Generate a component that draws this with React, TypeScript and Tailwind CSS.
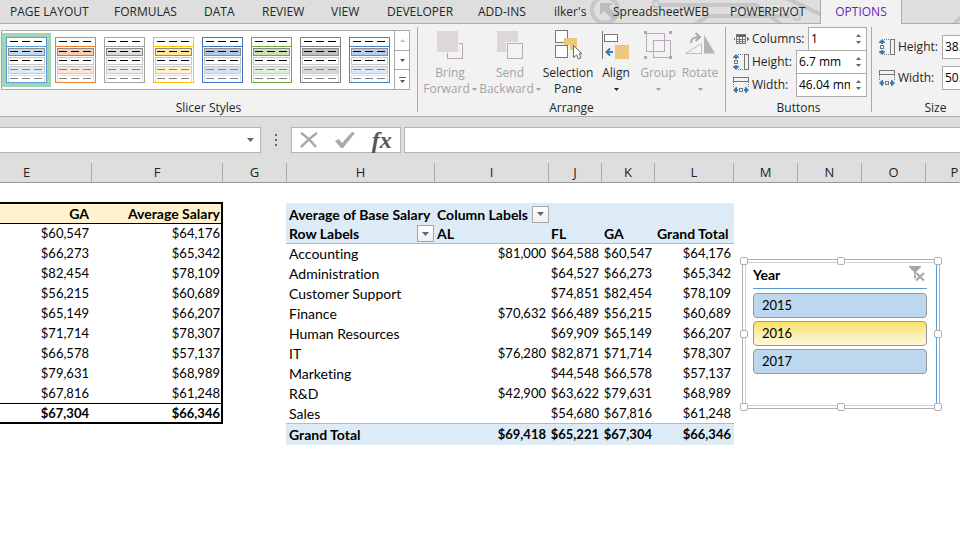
import type { ReactNode } from "react";

const TABS = [
  { name: "PAGE LAYOUT", width: "w-[104px]" },
  { name: "FORMULAS", width: "w-[90px]" },
  { name: "DATA", width: "w-[58px]" },
  { name: "REVIEW", width: "w-[69px]" },
  { name: "VIEW", width: "w-[56px]" },
  { name: "DEVELOPER", width: "w-[91px]" },
  { name: "ADD-INS", width: "w-[76px]" },
  { name: "ilker's", width: "w-[59px]" },
  { name: "SpreadsheetWEB", width: "w-[117px]" },
  { name: "POWERPIVOT", width: "w-[90px]" },
];

const SLICER_STYLES = [
  { name: "Light 1", edge: "#5b9bd5", on: "#bdd7ee", off: "#ddebf7" },
  { name: "Light 2", edge: "#ed7d31", on: "#f8cbad", off: "#fce4d6" },
  { name: "Light 3", edge: "#a5a5a5", on: "#dbdbdb", off: "#ededed" },
  { name: "Light 4", edge: "#ffc000", on: "#ffe699", off: "#fff2cc" },
  { name: "Light 5", edge: "#4472c4", on: "#b4c6e7", off: "#d9e1f2" },
  { name: "Light 6", edge: "#70ad47", on: "#c6e0b4", off: "#e2efda" },
  { name: "Other 1", edge: "#7f7f7f", on: "#bfbfbf", off: "#d9d9d9" },
  { name: "Other 2", edge: "#4f81bd", on: "#b4cbee", off: "#dce8f8" },
];

const COLUMNS = [
  { name: "E", width: "w-[92px] pr-[38px]" },
  { name: "F", width: "w-[131px]" },
  { name: "G", width: "w-16" },
  { name: "H", width: "w-[148px]" },
  { name: "I", width: "w-[114px]" },
  { name: "J", width: "w-[53px]" },
  { name: "K", width: "w-[53px]" },
  { name: "L", width: "w-[79px]" },
  { name: "M", width: "w-16" },
  { name: "N", width: "w-16" },
  { name: "O", width: "w-16" },
  { name: "P", width: "w-16 pr-1.5" },
];

const ROWS = [
  { label: "Accounting", al: "$81,000", fl: "$64,588", ga: "$60,547", total: "$64,176" },
  { label: "Administration", al: "", fl: "$64,527", ga: "$66,273", total: "$65,342" },
  { label: "Customer Support", al: "", fl: "$74,851", ga: "$82,454", total: "$78,109" },
  { label: "Finance", al: "$70,632", fl: "$66,489", ga: "$56,215", total: "$60,689" },
  { label: "Human Resources", al: "", fl: "$69,909", ga: "$65,149", total: "$66,207" },
  { label: "IT", al: "$76,280", fl: "$82,871", ga: "$71,714", total: "$78,307" },
  { label: "Marketing", al: "", fl: "$44,548", ga: "$66,578", total: "$57,137" },
  { label: "R&D", al: "$42,900", fl: "$63,622", ga: "$79,631", total: "$68,989" },
  { label: "Sales", al: "", fl: "$54,680", ga: "$67,816", total: "$61,248" },
];

const YEARS = [
  { year: "2015", selected: false },
  { year: "2016", selected: true },
  { year: "2017", selected: false },
];

const HANDLES = [
  "left-0 top-0",
  "left-1/2 top-0 -translate-x-1/2",
  "right-0 top-0",
  "left-0 top-1/2 -translate-y-1/2",
  "right-0 top-1/2 -translate-y-1/2",
  "bottom-0 left-0",
  "bottom-0 left-1/2 -translate-x-1/2",
  "bottom-0 right-0",
];

function Caret({ className = "text-[#666]" }: { className?: string }) {
  return (
    <svg viewBox="0 0 7 4" className={`h-1 w-[7px] ${className}`} aria-hidden="true">
      <path d="M0 0h7L3.5 4z" fill="currentColor" />
    </svg>
  );
}

function SmallCaret({ className = "" }: { className?: string }) {
  return (
    <svg viewBox="0 0 5 3" className={`h-[3px] w-[5px] ${className}`} aria-hidden="true">
      <path d="M0 0h5L2.5 3z" fill="currentColor" />
    </svg>
  );
}

function CircuitPattern() {
  return (
    <svg viewBox="0 0 380 23" className="absolute left-[580px] top-0 h-[23px] w-[380px]" aria-hidden="true">
      <g fill="none" stroke="#c6c6c6" strokeWidth="4">
        <circle cx="25" cy="10" r="13" />
        <path d="M80 5h96l26 20M114 25l14-9h82M206-2l36 17M372 26l14-14" />
        <circle cx="76" cy="4" r="3" strokeWidth="2" />
        <circle cx="217" cy="17" r="3" strokeWidth="2" />
      </g>
      <path d="M20 3h13l-4 4 8 9-4 4-9-9-4 4z" fill="#bcbcbc" />
    </svg>
  );
}

function StyleThumb({ edge, on, off }: { edge: string; on: string; off: string }) {
  const rows = [
    { y: 11, fill: on, line: "#8c8c8c", dash: "#000" },
    { y: 20, fill: "#fff", line: "#c8c8c8", dash: "#000" },
    { y: 29, fill: off, line: "#c8c8c8", dash: "#808080" },
    { y: 38, fill: "#fff", line: "#dcdcdc", dash: "#808080" },
  ];
  return (
    <svg viewBox="0 0 41 46" className="h-[46px] w-[41px]" shapeRendering="crispEdges" aria-hidden="true">
      <rect width="41" height="46" fill="#fff" />
      <path d="M4 4.5h8m4 0h8m4 0h8" stroke="#000" />
      {rows.map((r) => (
        <g key={r.y}>
          <rect x="2.5" y={r.y + 0.5} width="36" height="7" fill={r.fill} stroke={r.line} />
          <path d={`M4 ${r.y + 3.5}h8m4 0h8m4 0h8`} stroke={r.dash} />
        </g>
      ))}
      <path d="M.5.5h40v45H.5zM0 9.5h41" fill="none" stroke={edge} />
    </svg>
  );
}

function BringForwardIcon() {
  return (
    <svg viewBox="0 0 32 32" className="size-8" shapeRendering="crispEdges" aria-hidden="true">
      <rect x="13.5" y="14.5" width="15" height="15" fill="#f5f1f7" stroke="#b1adb3" />
      <rect x="2" y="1" width="23" height="23" fill="#f2f2f2" />
      <rect x="3" y="2" width="21" height="21" fill="#dcd7db" />
    </svg>
  );
}

function SendBackwardIcon() {
  return (
    <svg viewBox="0 0 32 32" className="size-8" shapeRendering="crispEdges" aria-hidden="true">
      <rect x="3" y="2" width="21" height="21" fill="#dcd7db" />
      <rect x="12" y="13" width="18" height="18" fill="#f2f2f2" />
      <rect x="13.5" y="14.5" width="15" height="15" fill="#f5f1f7" stroke="#b1adb3" />
    </svg>
  );
}

function SelectionPaneIcon() {
  return (
    <svg viewBox="0 0 32 32" className="size-8" aria-hidden="true">
      <g shapeRendering="crispEdges">
        <path d="M12 9h13v12h-7v-5h-6z" fill="#edc77d" />
        <rect x="3.5" y="1.5" width="12" height="12" fill="#fff" stroke="#777" />
        <path d="M12 9h4v5h-4z" fill="#edc77d" />
        <rect x="3.5" y="16.5" width="12" height="12" fill="#fff" stroke="#777" />
      </g>
      <path d="M21.5 16.5v12l3-2.5 2 4 2.5-1.2-2-4h3z" fill="#fff" stroke="#666" />
    </svg>
  );
}

function AlignIcon() {
  return (
    <svg viewBox="0 0 32 32" className="size-8" aria-hidden="true">
      <g shapeRendering="crispEdges">
        <path d="M2.5 2v28" stroke="#777" />
        <rect x="4.5" y="5.5" width="13" height="7" fill="#fff" stroke="#777" />
        <rect x="15" y="16" width="14" height="14" fill="#edc77d" />
      </g>
      <path d="M13 23H6M10 19.5L6.5 23l3.5 3.5" fill="none" stroke="#3e7ab8" strokeWidth="2" />
    </svg>
  );
}

function GroupIcon() {
  return (
    <svg viewBox="0 0 32 32" className="size-8" shapeRendering="crispEdges" aria-hidden="true">
      <path d="M4.5 4.5h18v18h-18zM11.5 11.5h17v17h-17z" fill="#f5f1f7" />
      <path d="M4.5 4.5h18v18h-18zM11.5 11.5h17v17h-17z" fill="none" stroke="#b1adb3" />
      <path d="M2 2h3v3H2zM27 2h3v3h-3zM2 27h3v3H2zM27 27h3v3h-3z" fill="#aaa" />
    </svg>
  );
}

function RotateIcon() {
  return (
    <svg viewBox="0 0 32 32" className="size-8" aria-hidden="true">
      <path d="M20 5.5v19h11z" fill="#b5b5b5" />
      <path d="M1.5 24.5h16v-10z" fill="#f5f1f7" stroke="#c0bcc2" />
      <path d="M7 14c0-5 3-6 8-6M11.5 4l4.5 4-4.5 4" fill="none" stroke="#aaa" strokeWidth="2" />
    </svg>
  );
}

function ColumnsIcon() {
  return (
    <svg viewBox="0 0 16 16" className="size-4 shrink-0" shapeRendering="crispEdges" aria-hidden="true">
      <path d="M3 3h10v3H3z" fill="#666" />
      <path d="M3.5 3.5h9v9h-9zM6.5 6v7M9.5 6v7M3 8.5h10M3 10.5h10" fill="none" stroke="#777" />
      <path d="M0 8l2-2v4zM16 8l-2-2v4z" fill="#3e7ab8" />
    </svg>
  );
}

function HeightIcon() {
  return (
    <svg viewBox="0 0 16 16" className="size-4 shrink-0" aria-hidden="true">
      <g shapeRendering="crispEdges" fill="none" stroke="#777">
        <rect x="11.5" y=".5" width="4" height="15" />
        <path d="M5 .5h6M5 15.5h6" strokeDasharray="1 1" />
        <rect x="1.5" y="6.5" width="3" height="3" />
      </g>
      <path d="M3 0L0 3v1h2v1h2V4h2V3zM3 16l3-3v-1H4v-1H2v1H0v1z" fill="#3e7ab8" />
    </svg>
  );
}

function WidthIcon() {
  return (
    <svg viewBox="0 0 16 16" className="size-4 shrink-0" aria-hidden="true">
      <g shapeRendering="crispEdges" fill="none" stroke="#777">
        <rect x=".5" y=".5" width="15" height="4" />
        <path d="M.5 5v5M15.5 5v5" strokeDasharray="1 1" />
        <rect x="6.5" y="11.5" width="3" height="3" />
      </g>
      <path d="M0 13l3-3h1v2h1v2H4v2H3zM16 13l-3-3h-1v2h-1v2h1v2h1z" fill="#3e7ab8" />
    </svg>
  );
}

function Group({ title, className, children }: { title: string; className: string; children: ReactNode }) {
  return (
    <section className={`flex shrink-0 flex-col border-r border-[#ababab] ${className}`}>
      <div className="h-[73px]">{children}</div>
      <h2 className="h-3 text-center leading-4">{title}</h2>
    </section>
  );
}

function ToolButton({
  icon,
  lines,
  width,
  disabled = false,
  menu = false,
}: {
  icon: ReactNode;
  lines: string[];
  width: string;
  disabled?: boolean;
  menu?: boolean;
}) {
  return (
    <button
      type="button"
      disabled={disabled}
      className={`flex shrink-0 flex-col items-center leading-4 whitespace-nowrap ${width} ${disabled ? "text-[#a3a3a3]" : "text-[#262626]"}`}
    >
      {icon}
      <span className="mt-1">{lines[0]}</span>
      <span className="flex h-4 items-center gap-0.5">
        {lines[1]}
        {menu && <SmallCaret />}
      </span>
    </button>
  );
}

function SpinField({
  id,
  label,
  value,
  icon,
  boxWidth,
}: {
  id: string;
  label: string;
  value: string;
  icon: ReactNode;
  boxWidth: string;
}) {
  return (
    <div className="flex h-[23px] items-center">
      {icon}
      <label htmlFor={id} className="ml-[3px] flex-1 whitespace-nowrap">
        {label}
      </label>
      <div className={`flex h-6 shrink-0 border border-[#ababab] bg-white ${boxWidth}`}>
        <input id={id} defaultValue={value} className="w-0 flex-1 pl-0.5 text-black outline-none" />
        <div className="flex w-4 flex-col items-center justify-around py-1 text-[#666]">
          <button type="button" aria-label={`Increase ${label}`}>
            <SmallCaret className="rotate-180" />
          </button>
          <button type="button" aria-label={`Decrease ${label}`}>
            <SmallCaret />
          </button>
        </div>
      </div>
    </div>
  );
}

function FilterButton({ label }: { label: string }) {
  return (
    <button
      type="button"
      aria-label={label}
      className="flex h-[17px] w-[17px] shrink-0 items-center justify-center border border-[#a6a6a6] bg-linear-to-b from-white to-[#f0f0f0]"
    >
      <Caret />
    </button>
  );
}

function SummaryTable() {
  return (
    <table className="mt-[19px] w-[223px] shrink-0 table-fixed border-collapse border-2 border-l-0 border-black text-right">
      <thead>
        <tr className="h-5 border-b border-black bg-[#fff2cc] text-sm leading-[17px]">
          <th className="w-[92px] pt-px pr-[3px]">GA</th>
          <th className="pt-px pr-px">Average Salary</th>
        </tr>
      </thead>
      <tbody>
        {ROWS.map((row) => (
          <tr key={row.label} className="h-5">
            <td className="pt-px pr-[3px]">{row.ga}</td>
            <td className="pt-px pr-px">{row.total}</td>
          </tr>
        ))}
        <tr className="h-5 border-t border-black font-bold">
          <td className="pt-px pr-[3px]">$67,304</td>
          <td className="pt-px pr-px">$66,346</td>
        </tr>
      </tbody>
    </table>
  );
}

function PivotTable() {
  return (
    <table className="mt-5 ml-[63px] w-[448px] shrink-0 table-fixed border-collapse text-right">
      <colgroup>
        <col className="w-[149px]" />
        <col className="w-[114px]" />
        <col className="w-[53px]" />
        <col className="w-[53px]" />
        <col className="w-[79px]" />
      </colgroup>
      <thead className="bg-[#ddebf7] text-left text-sm leading-[17px] whitespace-nowrap">
        <tr className="h-5">
          <th className="pt-0.5 pl-[3px]">Average of Base Salary</th>
          <th colSpan={4} className="pt-0.5 pl-0.5">
            <div className="flex items-center gap-1">
              Column Labels
              <FilterButton label="Filter column labels" />
            </div>
          </th>
        </tr>
        <tr className="h-5 border-b border-[#9bc2e6]">
          <th className="pt-0.5 pr-px pl-[3px]">
            <div className="flex items-center justify-between">
              Row Labels
              <FilterButton label="Filter row labels" />
            </div>
          </th>
          <th className="pt-0.5 pl-0.5">AL</th>
          <th className="pt-0.5 pl-0.5">FL</th>
          <th className="pt-0.5 pl-0.5">GA</th>
          <th className="pt-0.5 pl-0.5">Grand Total</th>
        </tr>
      </thead>
      <tbody>
        {ROWS.map((row) => (
          <tr key={row.label} className="h-5">
            <th className="pt-px pl-[3px] text-left text-sm leading-[17px] font-normal">{row.label}</th>
            <td className="pt-px pr-[3px]">{row.al}</td>
            <td className="pt-px pr-[3px]">{row.fl}</td>
            <td className="pt-px pr-[3px]">{row.ga}</td>
            <td className="pt-px pr-[3px]">{row.total}</td>
          </tr>
        ))}
      </tbody>
      <tfoot>
        <tr className="h-[22px] border-t border-[#9bc2e6] bg-[#ddebf7] font-bold">
          <th className="pt-px pl-[3px] text-left text-sm leading-[17px]">Grand Total</th>
          <td className="pt-px pr-[3px]">$69,418</td>
          <td className="pt-px pr-[3px]">$65,221</td>
          <td className="pt-px pr-[3px]">$67,304</td>
          <td className="pt-px pr-[3px]">$66,346</td>
        </tr>
      </tfoot>
    </table>
  );
}

function YearSlicer() {
  return (
    <div className="absolute left-[740px] top-[74px] h-[154px] w-[202px] p-0.5">
      <div className="h-full border border-[#b0b0b0] bg-white p-0.5">
        <section className="h-full border border-[#d0d0d0] border-r-[#5b9bd5] pr-[9px] pl-[7px]">
          <header className="flex h-[26px] items-start justify-between border-b border-[#5b9bd5] pt-[3px]">
            <h3 className="text-sm leading-[18px] font-bold">Year</h3>
            <button type="button" aria-label="Clear filter" disabled>
              <svg viewBox="0 0 18 16" className="h-4 w-[18px]" aria-hidden="true">
                <path d="M0 0h12v1L7 6v8L5 12V6L0 1z" fill="#a6a6a6" />
                <path d="M7 7l8 7.5M15 7l-8 7.5" stroke="#fff" strokeWidth="4" />
                <path d="M7 7l8 7.5M15 7l-8 7.5" stroke="#a6a6a6" strokeWidth="2" />
              </svg>
            </button>
          </header>
          <div className="mt-1 flex flex-col gap-[3px]">
            {YEARS.map(({ year, selected }) => (
              <button
                key={year}
                type="button"
                aria-pressed={selected}
                className={`h-[25px] rounded border border-[#999] pl-2 text-left ${selected ? "bg-linear-to-b from-[#f8e162] to-[#fcf7e0]" : "bg-[#bdd7ee]"}`}
              >
                {year}
              </button>
            ))}
          </div>
        </section>
      </div>
      {HANDLES.map((place) => (
        <span key={place} className={`absolute size-2 rounded-xs border border-[#b0b0b0] bg-white ${place}`} />
      ))}
    </div>
  );
}

export default function App() {
  return (
    <div className="flex min-h-screen flex-col overflow-hidden bg-white font-['Open_Sans','Noto_Sans',sans-serif] text-xs text-[#262626]">
      {/* Ribbon tabs */}
      <nav className="relative flex h-6 border-b border-[#ababab] bg-[#dedede] pl-[10px]">
        <CircuitPattern />
        {TABS.map((tab) => (
          <button key={tab.name} type="button" className={`relative shrink-0 text-left whitespace-nowrap ${tab.width}`}>
            {tab.name}
          </button>
        ))}
        <button
          type="button"
          aria-current="page"
          className="relative h-6 w-[82px] shrink-0 border-x border-[#ababab] bg-[#f2f2f2] text-[#6a1fb5]"
        >
          OPTIONS
        </button>
      </nav>

      {/* Ribbon */}
      <div className="flex h-[93px] overflow-hidden border-b border-[#ababab] bg-[#f2f2f2] pt-[3px] pb-1">
        <Group title="Slicer Styles" className="w-[418px]">
          <div className="mt-[3px] ml-px flex h-[60px] w-[409px] border border-[#ababab] bg-white">
            <div className="flex flex-1 pt-0.5">
              {SLICER_STYLES.map((style, i) => (
                <button
                  key={style.name}
                  type="button"
                  aria-label={`Slicer Style ${style.name}`}
                  className={`flex h-[54px] w-[49px] shrink-0 items-center justify-center ${i === 0 ? "bg-[#9fd5b7]" : ""}`}
                >
                  <StyleThumb edge={style.edge} on={style.on} off={style.off} />
                </button>
              ))}
            </div>
            <div className="flex w-[15px] flex-col divide-y divide-[#ababab] border-l border-[#ababab]">
              <button type="button" aria-label="Scroll up" disabled className="flex flex-1 items-center justify-center">
                <SmallCaret className="rotate-180 text-[#c0c0c0]" />
              </button>
              <button type="button" aria-label="Scroll down" className="flex flex-1 items-center justify-center">
                <SmallCaret className="text-[#555]" />
              </button>
              <button type="button" aria-label="More styles" className="flex flex-1 flex-col items-center justify-center gap-0.5">
                <span className="h-px w-[7px] bg-[#666]" />
                <SmallCaret className="text-[#555]" />
              </button>
            </div>
          </div>
        </Group>

        <Group title="Arrange" className="w-[308px]">
          <div className="flex pt-0.5 pl-1">
            <ToolButton icon={<BringForwardIcon />} lines={["Bring", "Forward"]} width="w-14" disabled menu />
            <ToolButton icon={<SendBackwardIcon />} lines={["Send", "Backward"]} width="w-16" disabled menu />
            <ToolButton icon={<SelectionPaneIcon />} lines={["Selection", "Pane"]} width="w-[52px]" />
            <ToolButton icon={<AlignIcon />} lines={["Align"]} width="w-11" menu />
            <ToolButton icon={<GroupIcon />} lines={["Group"]} width="w-10" disabled menu />
            <ToolButton icon={<RotateIcon />} lines={["Rotate"]} width="w-11" disabled menu />
          </div>
        </Group>

        <Group title="Buttons" className="w-[146px]">
          <div className="pr-1 pl-[7px]">
            <SpinField id="columns" label="Columns:" value="1" icon={<ColumnsIcon />} boxWidth="w-[59px]" />
            <SpinField id="button-height" label="Height:" value="6.7 mm" icon={<HeightIcon />} boxWidth="w-[71px]" />
            <SpinField id="button-width" label="Width:" value="46.04 mm" icon={<WidthIcon />} boxWidth="w-[71px]" />
          </div>
        </Group>

        <Group title="Size" className="w-[128px]">
          <div className="flex w-[134px] flex-col gap-2 pt-2 pl-[7px]">
            <SpinField id="slicer-height" label="Height:" value="38.1 mm" icon={<HeightIcon />} boxWidth="w-16" />
            <SpinField id="slicer-width" label="Width:" value="50.8 mm" icon={<WidthIcon />} boxWidth="w-16" />
          </div>
        </Group>
      </div>

      {/* Formula bar */}
      <div className="flex h-[46px] bg-[#dedede] pt-[10px]">
        <button
          type="button"
          aria-label="Name box"
          className="flex h-[26px] w-[261px] shrink-0 items-center justify-end border border-l-0 border-[#b5b5b5] bg-white pr-1.5"
        >
          <Caret />
        </button>
        <div className="flex h-[26px] w-[30px] shrink-0 flex-col items-center justify-center gap-[3px]">
          <span className="size-0.5 bg-[#666]" />
          <span className="size-0.5 bg-[#666]" />
          <span className="size-0.5 bg-[#666]" />
        </div>
        <div className="flex h-[26px] w-[110px] shrink-0 items-center justify-around border border-[#b5b5b5] bg-white">
          <button type="button" aria-label="Cancel">
            <svg viewBox="0 0 18 16" className="h-4 w-[18px]" aria-hidden="true">
              <path d="M1 1c6 4 10 8 15 14M17 1C11 5 6 10 1 15" fill="none" stroke="#a8a8a8" strokeWidth="2.5" />
            </svg>
          </button>
          <button type="button" aria-label="Enter">
            <svg viewBox="0 0 20 16" className="h-4 w-5" aria-hidden="true">
              <path d="M0 9l4-2 3 4L17 0l3 1L8 16H6z" fill="#aaa" />
            </svg>
          </button>
          <button
            type="button"
            aria-label="Insert function"
            className="font-['Liberation_Serif',serif] text-2xl leading-6 font-bold text-[#555] italic"
          >
            fx
          </button>
        </div>
        <input aria-label="Formula" className="ml-[3px] h-[26px] min-w-0 flex-1 border border-r-0 border-[#b5b5b5] bg-white" />
      </div>

      {/* Column headings */}
      <div className="flex h-5 overflow-hidden border-b border-[#999] bg-[#dedede] text-[13px] leading-[19px] text-[#222]">
        {COLUMNS.map((col) => (
          <div key={col.name} className={`shrink-0 border-r border-[#ababab] text-center ${col.width}`}>
            {col.name}
          </div>
        ))}
      </div>

      {/* Sheet */}
      <main className="relative flex items-start font-['Lato','Open_Sans',sans-serif] text-[13px] leading-[17px] text-black [font-variant-ligatures:none]">
        <SummaryTable />
        <PivotTable />
        <YearSlicer />
      </main>
    </div>
  );
}
